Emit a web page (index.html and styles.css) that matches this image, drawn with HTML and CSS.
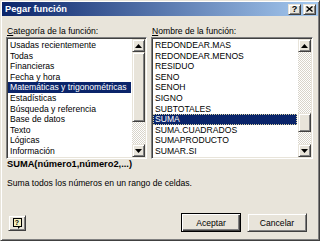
FILE: index.html
```html
<!DOCTYPE html>
<html lang="es">
<head>
  <meta charset="UTF-8">
  <title>Pegar función</title>
  <link rel="stylesheet" href="styles.css">
</head>
<body>
  <div class="dialog">
    <div class="titlebar">
      <span class="title">Pegar función</span>
      <div class="caption-buttons">
        <span class="cap-btn raised help-cap">?</span>
        <span class="cap-btn raised">
          <svg width="7" height="6" viewBox="0 0 7 6"><path d="M0.5 0.5 L6.5 5.5 M6.5 0.5 L0.5 5.5" stroke="#000" stroke-width="1.4"/></svg>
        </span>
      </div>
    </div>

    <div class="content">
      <div class="lists">
        <div class="field">
          <div class="label"><u>C</u>ategoría de la función:</div>
          <div class="listbox">
            <ul class="items">
              <li>Usadas recientemente</li>
              <li>Todas</li>
              <li>Financieras</li>
              <li>Fecha y hora</li>
              <li class="selected">Matemáticas y trigonométricas</li>
              <li>Estadísticas</li>
              <li>Búsqueda y referencia</li>
              <li>Base de datos</li>
              <li>Texto</li>
              <li>Lógicas</li>
              <li>Información</li>
            </ul>
            <div class="scrollbar">
              <div class="arrow raised">
                <svg width="7" height="4" viewBox="0 0 7 4"><path d="M3.5 0 L7 4 L0 4 Z" fill="#000"/></svg>
              </div>
              <div class="thumb raised cat-thumb"></div>
              <div class="track"></div>
              <div class="arrow raised">
                <svg width="7" height="4" viewBox="0 0 7 4"><path d="M0 0 L7 0 L3.5 4 Z" fill="#000"/></svg>
              </div>
            </div>
          </div>
        </div>

        <div class="field">
          <div class="label"><u>N</u>ombre de la función:</div>
          <div class="listbox">
            <ul class="items">
              <li>REDONDEAR.MAS</li>
              <li>REDONDEAR.MENOS</li>
              <li>RESIDUO</li>
              <li>SENO</li>
              <li>SENOH</li>
              <li>SIGNO</li>
              <li>SUBTOTALES</li>
              <li class="selected focused">SUMA</li>
              <li>SUMA.CUADRADOS</li>
              <li>SUMAPRODUCTO</li>
              <li>SUMAR.SI</li>
            </ul>
            <div class="scrollbar">
              <div class="arrow raised">
                <svg width="7" height="4" viewBox="0 0 7 4"><path d="M3.5 0 L7 4 L0 4 Z" fill="#000"/></svg>
              </div>
              <div class="track fn-track-top"></div>
              <div class="thumb raised fn-thumb"></div>
              <div class="track"></div>
              <div class="arrow raised">
                <svg width="7" height="4" viewBox="0 0 7 4"><path d="M0 0 L7 0 L3.5 4 Z" fill="#000"/></svg>
              </div>
            </div>
          </div>
        </div>
      </div>

      <div class="syntax">SUMA(número1,número2,...)</div>
      <div class="desc">Suma todos los números en un rango de celdas.</div>

      <div class="footer">
        <span class="help-btn raised"><span class="help-icon">?</span></span>
        <span class="push raised default">Aceptar</span>
        <span class="push raised">Cancelar</span>
      </div>
    </div>
  </div>
</body>
</html>
```

FILE: styles.css
```css
body {
  margin: 0;
  font-family: "Liberation Sans", Arial, sans-serif;
  font-size: 8.6px;
  color: #000;
  background: #fff;
}
.dialog {
  box-sizing: border-box;
  width: 320px;
  height: 241px;
  background: #e8e4da;
  border: 1px solid;
  border-color: #e8e4da #404040 #404040 #e8e4da;
  box-shadow: inset 1px 1px #fff, inset -1px -1px #808080;
  padding: 1px;
}
.raised {
  box-sizing: border-box;
  background: #e8e4da;
  border: 1px solid;
  border-color: #e8e4da #404040 #404040 #e8e4da;
  box-shadow: inset 1px 1px #fff, inset -1px -1px #808080;
}
.titlebar {
  height: 14px;
  display: flex;
  align-items: center;
  justify-content: space-between;
  padding: 0 2px 0 3px;
  background: linear-gradient(to right, #0a246a, #a6caf0);
}
.title {
  color: #fff;
  font-weight: bold;
  font-size: 9.3px;
}
.caption-buttons {
  display: flex;
  gap: 2px;
}
.cap-btn {
  width: 13px;
  height: 11px;
  display: flex;
  align-items: center;
  justify-content: center;
  font-weight: bold;
  font-size: 9px;
  line-height: 9px;
}
.content {
  padding: 10px 4px 0 4px;
}
.lists {
  display: grid;
  grid-template-columns: 141px 162px;
  gap: 4px;
}
.label {
  line-height: 11px;
  height: 11px;
  padding-left: 1px;
}
.listbox {
  box-sizing: border-box;
  height: 122px;
  display: flex;
  background: #fff;
  border: 1px solid;
  border-color: #808080 #fff #fff #808080;
  box-shadow: inset 1px 1px #404040, inset -1px -1px #e8e4da;
  padding: 1px;
}
.items {
  flex: 1;
  list-style: none;
  margin: 0;
  padding: 1px 1px 0 0;
  overflow: hidden;
}
.items li {
  height: 10.6px;
  line-height: 10.6px;
  padding-left: 2px;
  white-space: nowrap;
}
.items li.selected {
  background: #0a246a;
  color: #fff;
}
.items li.focused {
  outline: 1px dotted #d8d0a0;
  outline-offset: -1px;
}
.scrollbar {
  width: 13px;
  display: flex;
  flex-direction: column;
}
.arrow {
  height: 13px;
  display: flex;
  align-items: center;
  justify-content: center;
}
.track {
  flex: 1;
  background: repeating-conic-gradient(#fff 0 25%, #d8d4ca 0 50%) 0 0 / 2px 2px;
}
.fn-track-top {
  flex: 0 0 61px;
}
.cat-thumb {
  height: 70px;
}
.fn-thumb {
  height: 19px;
}
.syntax {
  font-weight: bold;
  font-size: 9.3px;
  line-height: 11px;
  padding-left: 1px;
}
.desc {
  margin-top: 8px;
  line-height: 11px;
  padding-left: 1px;
}
.footer {
  display: flex;
  align-items: center;
  margin-top: 24px;
  padding: 0 7px 0 2px;
  gap: 6px;
}
.help-btn {
  width: 18px;
  height: 16px;
  display: flex;
  align-items: center;
  justify-content: center;
  margin-right: auto;
}
.help-icon {
  position: relative;
  box-sizing: border-box;
  width: 9px;
  height: 9px;
  border: 1px solid #000;
  background: #f4f0c0;
  font-size: 7px;
  font-weight: bold;
  line-height: 7px;
  text-align: center;
}
.help-icon::after {
  content: "";
  position: absolute;
  left: 4px;
  bottom: -3px;
  border-left: 2px solid #000;
  border-bottom: 2px solid transparent;
  height: 1px;
}
.push {
  width: 60px;
  height: 19px;
  display: flex;
  align-items: center;
  justify-content: center;
}
.push.default {
  border-color: #000;
  box-shadow: inset 1px 1px #fff, inset -1px -1px #404040, inset -2px -2px #808080;
}
```
